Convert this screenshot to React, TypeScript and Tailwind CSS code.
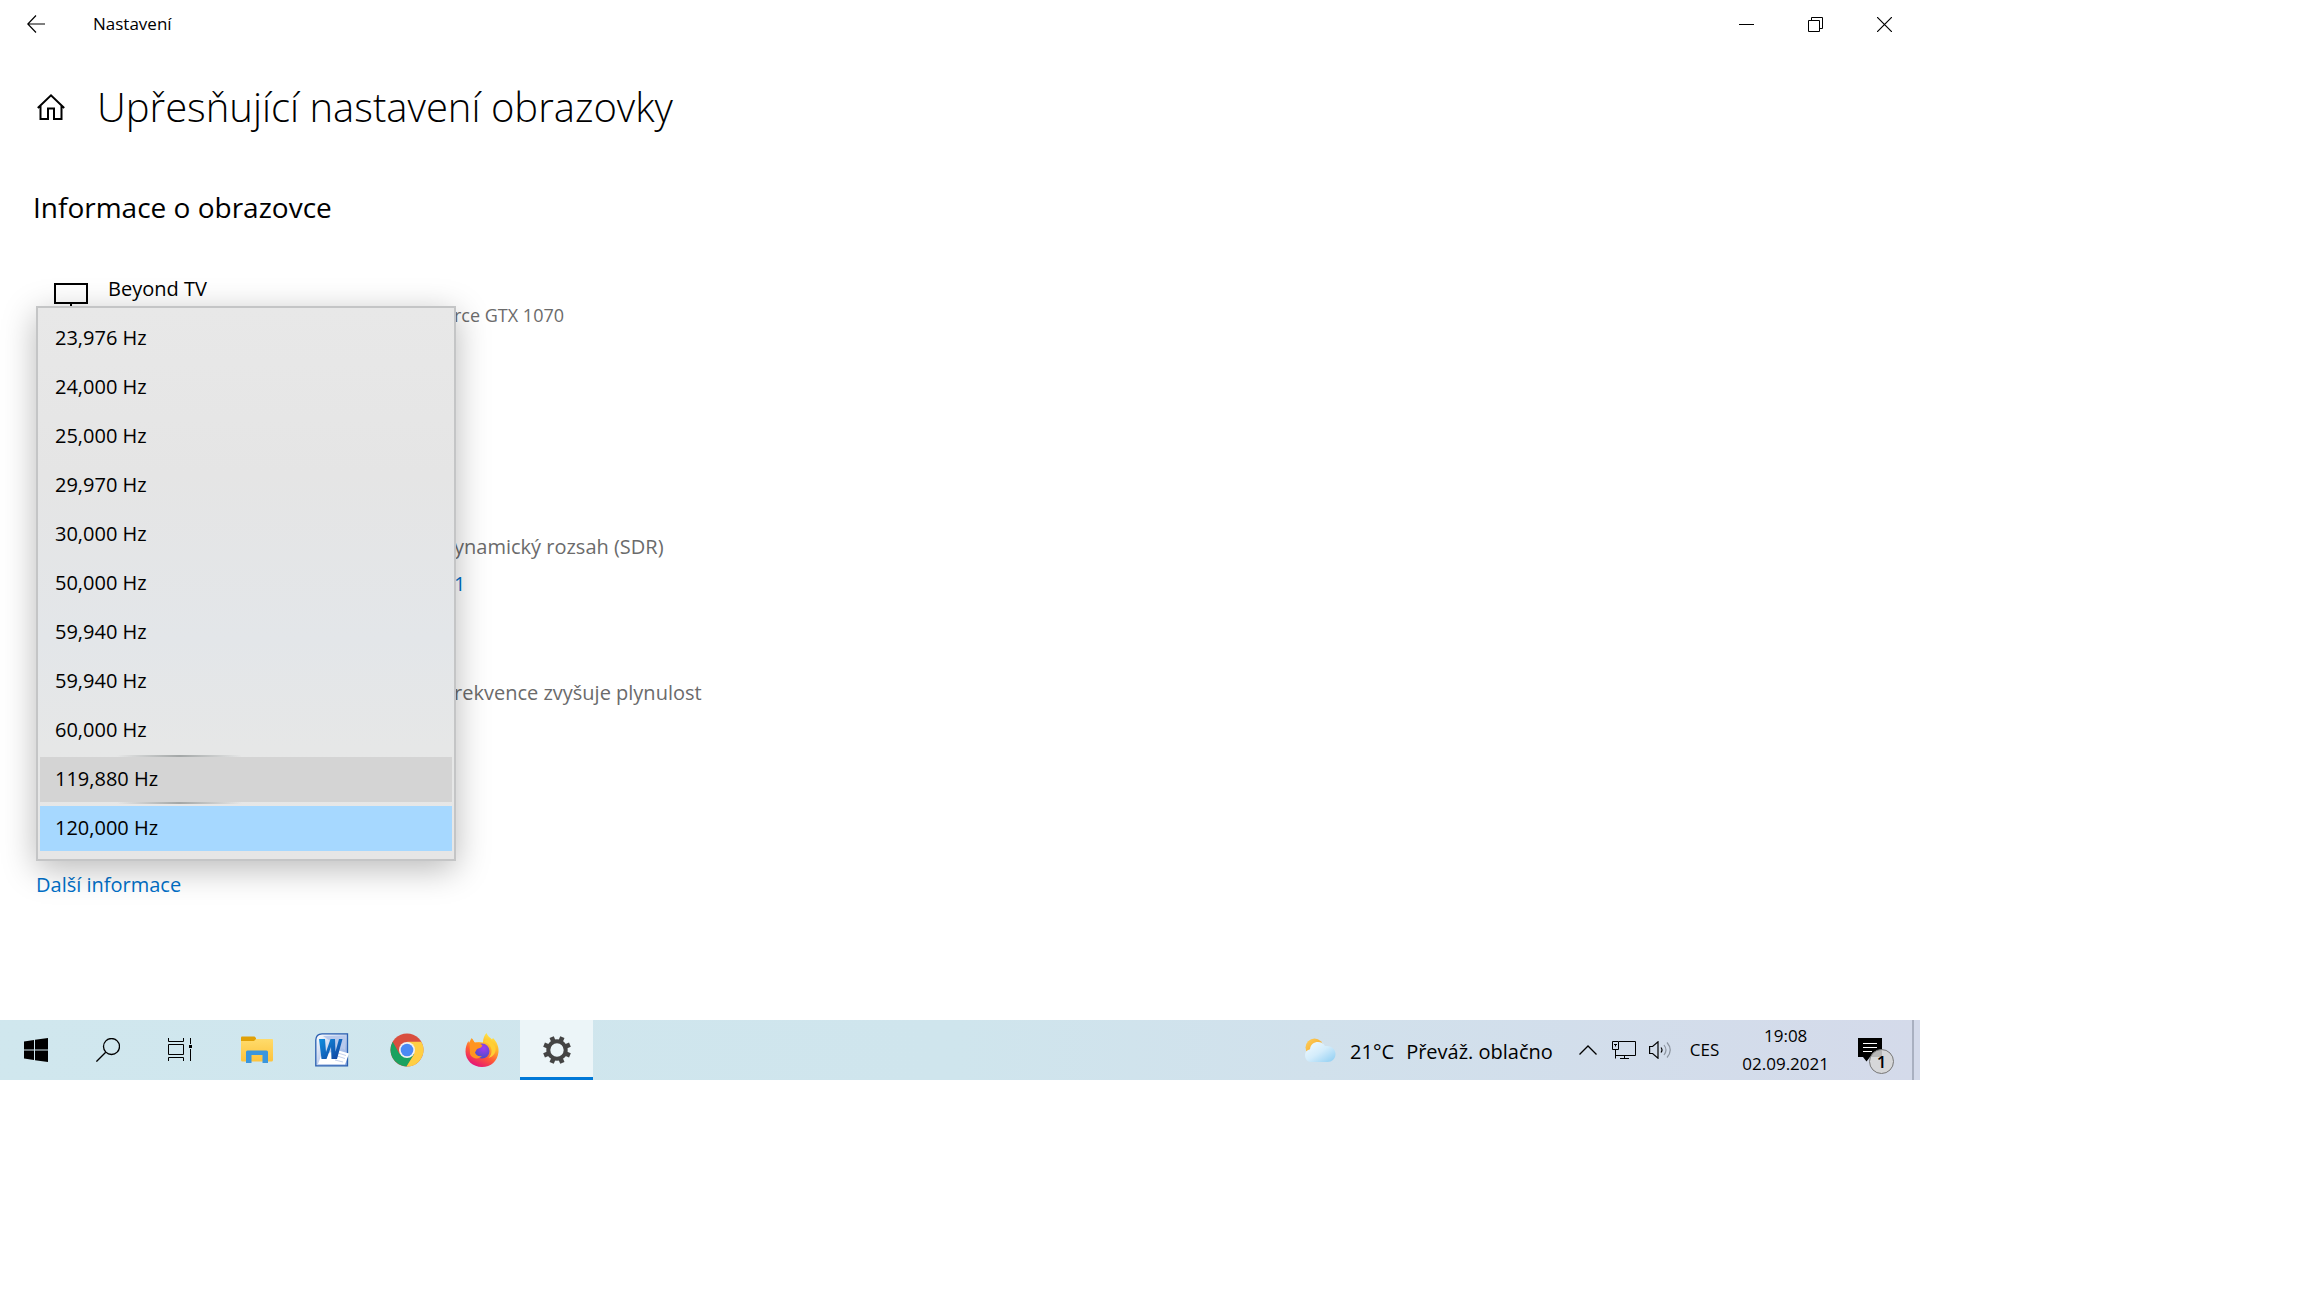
import React from 'react';

const rates = [
  '23,976 Hz',
  '24,000 Hz',
  '25,000 Hz',
  '29,970 Hz',
  '30,000 Hz',
  '50,000 Hz',
  '59,940 Hz',
  '59,940 Hz',
  '60,000 Hz',
  '119,880 Hz',
  '120,000 Hz',
];

const optionBase = 'block h-[49px] px-[15px] pt-[8px] text-[20px] text-black border-y-2 border-transparent bg-clip-padding';
// pointer is over this row, so it gets the soft reveal line above and below
const optionHover =
  'bg-black/8 [border-image:linear-gradient(to_right,transparent_19%,#a3a7a7_34%,transparent_49%)_2]';
const optionSelected = 'bg-[linear-gradient(#a6d8ff,#a6d8ff)]';

const BackIcon = () => (
  <svg width="18" height="18" viewBox="0 0 18 18" fill="none" stroke="#000" strokeWidth="1.2">
    <path d="M9 .5.8 9 9 17.500M.8 9H18" />
  </svg>
);

const HomeIcon = () => (
  <svg width="28" height="26" viewBox="0 0 28 26" fill="none" stroke="#000" strokeWidth="2">
    <path d="M.8 14 14 1.400 27.200 14M3.500 11.800V25H11V14.500h6V25h7.500V11.800" />
  </svg>
);

const MonitorIcon = () => (
  <svg width="34" height="30" viewBox="0 0 34 30" fill="none" stroke="#000" strokeWidth="2">
    <path d="M1 1h32v19H1zM17 20v7M9 28h16" />
  </svg>
);

const WindowsIcon = () => (
  <svg width="24" height="24" viewBox="0 0 24 24">
    <path d="M0 3.400 10 2v9.500H0zM11 1.800 24 0v11.500H11zM0 12.500h10V22L0 20.600zM11 12.500h13V24l-13-1.800z" />
  </svg>
);

const SearchIcon = () => (
  <svg width="24" height="24" viewBox="0 0 24 24" fill="none" stroke="#000" strokeWidth="1.300">
    <circle cx="15.500" cy="8.500" r="8" />
    <path d="M9.700 14.200.4 23.600" />
  </svg>
);

const TaskViewIcon = () => (
  <svg width="24" height="24" viewBox="0 0 24 24" fill="none" stroke="#000" strokeWidth="1">
    <path d="M.5 0v3.500h15V0M.5 6.500h15v10H.5zM.5 23v-3.500h15V23M22.500 0v6M22.500 11v12" />
    <path d="M21 7h3v3h-3z" fill="#000" stroke="none" />
  </svg>
);

const FolderIcon = () => (
  <svg width="32" height="28" viewBox="0 0 32 28">
    <defs>
      <linearGradient id="folder" x1="0" y1="0" x2="0" y2="1">
        <stop offset="0" stopColor="#ffdb6b" />
        <stop offset="1" stopColor="#fdc33c" />
      </linearGradient>
    </defs>
    <path d="M0 1.500Q0 .5 1 .5h12.500L15 2v3H0z" fill="#e0a006" />
    <path d="M0 5h13l2-2h16q1 0 1 1v20q0 1.500-1.500 1.500h-29Q0 25.500 0 24z" fill="url(#folder)" />
    <path d="M5 27V16q0-1.500 1.500-1.500h19q1.500 0 1.500 1.500v11h-5.500v-8h-11v8z" fill="#3a96dd" />
  </svg>
);

const WordIcon = () => (
  <svg width="34" height="34" viewBox="0 0 34 34">
    <defs>
      <linearGradient id="wordBg" x1="0" y1="0" x2="1" y2="1">
        <stop offset="0" stopColor="#fff" />
        <stop offset="1" stopColor="#7fa0dc" />
      </linearGradient>
      <linearGradient id="wordW" x1="0" y1="0" x2="1" y2="1">
        <stop offset="0" stopColor="#0f8fe0" />
        <stop offset="1" stopColor="#123f9c" />
      </linearGradient>
    </defs>
    <path d="M7 .8h25.500v32H.8V7Q1 1 7 .8z" fill="url(#wordBg)" stroke="#2a5fb0" strokeWidth="1.300" />
    <path d="M8 3h22v14L18 10z" fill="#b8c9ec" />
    <path d="m22 17 12 3.500-4 11L3 31l3-8z" fill="#fff" />
    <path d="m23 20 8 2.500M22 23l8 2.500M20 27l8 2" stroke="#c5d2ec" strokeWidth="1" />
    <path d="M4 6h6l1 13L15.500 6H20l.5 12.500L24 6h3.500L22 26h-5.500L16 14l-4.500 12H6.500z" fill="url(#wordW)" />
  </svg>
);

const ChromeIcon = () => (
  <svg width="34" height="34" viewBox="0 0 34 34">
    <circle cx="17" cy="17" r="16.500" fill="#d94f3f" />
    <path d="M2.700 8.800A16.500 16.500 0 0 0 16.500 33.500L24.500 21 9.500 21z" fill="#1aa260" />
    <path d="M31.300 8.800A16.500 16.500 0 0 1 16.500 33.500L24.200 21l-7-12.200z" fill="#ffcf44" />
    <circle cx="17" cy="17" r="8" fill="#f1f1f1" />
    <circle cx="17" cy="17" r="6.300" fill="#4a8af4" />
  </svg>
);

const FirefoxIcon = () => (
  <svg width="34" height="36" viewBox="0 0 34 36">
    <defs>
      <linearGradient id="fox" x1=".8" y1="0" x2=".3" y2="1">
        <stop offset="0" stopColor="#fff24a" />
        <stop offset=".35" stopColor="#ffb32c" />
        <stop offset=".65" stopColor="#ff5a36" />
        <stop offset="1" stopColor="#e3107c" />
      </linearGradient>
      <radialGradient id="globe" cx=".6" cy=".3" r=".7">
        <stop offset="0" stopColor="#a43bf0" />
        <stop offset="1" stopColor="#4a4fc8" />
      </radialGradient>
    </defs>
    <path
      d="M21.500 1c1 3 3.500 4.500 5.500 6.500l1-1.500c4 4 6 9 5.500 14C32.500 29 26 35 17 35 8 35 .5 28.500.5 19.500c0-4 1-7.500 3-10.500L4 11l2.500-5 3 4.500c3-.8 6-.8 8.500 0C18 6.500 19.500 3 21.500 1z"
      fill="url(#fox)"
    />
    <circle cx="17" cy="19" r="7.500" fill="url(#globe)" />
    <path d="M4.500 11 7 6.500l3 4.500c3-.5 5 .5 7.500 2.500l-1.500 2-4 1.500-2 3.500c1 3 4 4.500 7 3.500-3 4-10 3-12-2z" fill="#ff9420" />
    <path d="M18 10c4 0 8 3.500 8.500 8 .3 3-.8 6-3 8 5-1.500 8-5.500 7-10.500C29.500 12 26 10 24 6z" fill="#ffcf35" />
  </svg>
);

const GearIcon = () => (
  <svg width="28" height="28" viewBox="0 0 28 28" fill="none" stroke="#444">
    <circle cx="14" cy="14" r="8.700" strokeWidth="4" />
    <g strokeWidth="4.600">
      <path d="M14 0v5M14 23v5M0 14h5M23 14h5" transform="rotate(22.500 14 14)" />
      <path d="M14 0v5M14 23v5M0 14h5M23 14h5" transform="rotate(67.500 14 14)" />
    </g>
  </svg>
);

const WeatherIcon = () => (
  <svg width="32" height="24" viewBox="0 0 32 24">
    <defs>
      <linearGradient id="cloud" x1="0" y1="0" x2="1" y2="1">
        <stop offset="0" stopColor="#f4fbff" />
        <stop offset=".5" stopColor="#d3ecfb" />
        <stop offset="1" stopColor="#8ccdf2" />
      </linearGradient>
      <linearGradient id="sun" x1="0" y1="0" x2="1" y2="1">
        <stop offset="0" stopColor="#ffd05c" />
        <stop offset="1" stopColor="#f09a1a" />
      </linearGradient>
    </defs>
    <circle cx="10.500" cy="9.500" r="9" fill="url(#sun)" />
    <path d="M7 24a6.500 6.500 0 0 1-1-12.800C6.500 6.500 10 4 14 4c3 0 5.500 1.500 7 4 5.500-.8 10.500 2.500 10.500 8 0 4.500-3.500 8-8 8z" fill="url(#cloud)" />
  </svg>
);

const ChevronIcon = () => (
  <svg width="18" height="10" viewBox="0 0 18 10" fill="none" stroke="#000" strokeWidth="1.300">
    <path d="m.5 9.500 8.500-8.500 8.500 8.500" />
  </svg>
);

const NetworkIcon = () => (
  <svg width="24" height="18" viewBox="0 0 24 18" fill="none" stroke="#000" strokeWidth="1">
    <path d="M7 .5h16.500v14H3.500M.5.500H6.500v8H.5zM3.500 8.500v9M2 3.500h3M3.500 3.500v2M8 17.500h9M12.500 14.500v3" />
  </svg>
);

const SpeakerIcon = () => (
  <svg width="23" height="18" viewBox="0 0 23 18" fill="none" stroke="#000" strokeWidth="1.200">
    <path d="M.6 5.500h3L9 .8v16.400l-5.400-4.700h-3zM12 6.500q2 2.500 0 5" />
    <path d="M15 4q4 5 0 10M18 1.500q6.500 7.500 0 15" stroke="#8d95a0" />
  </svg>
);

const MessageIcon = () => (
  <svg width="24" height="24" viewBox="0 0 24 24">
    <path d="M0 0h24v19H12l-3.500 4.500L5 19H0z" />
    <path d="M5 5.500h14M5 9.500h14M5 13.500h9" stroke="#fff" />
  </svg>
);

const TitleBar = () => (
  <header className="flex h-[48px] items-center text-[17px]">
    <button aria-label="Zpět" className="flex w-[72px] justify-center">
      <BackIcon />
    </button>
    <span className="ml-[21px]">Nastavení</span>
    <div className="mr-px ml-auto flex">
      <button aria-label="Minimalizovat" className="flex h-[48px] w-[69px] items-center justify-center">
        <svg width="15" height="15" stroke="#000"><path d="M0 7.500h15" /></svg>
      </button>
      <button aria-label="Obnovit" className="flex h-[48px] w-[69px] items-center justify-center">
        <svg width="15" height="15" fill="none" stroke="#000"><path d="M.5 3.500h11v11H.5zM3.500 3.500v-3h11v11h-3" /></svg>
      </button>
      <button aria-label="Zavřít" className="flex h-[48px] w-[69px] items-center justify-center">
        <svg width="15" height="15" stroke="#000" strokeWidth="1.200"><path d="m0 0 15 15M15 0 0 15" /></svg>
      </button>
    </div>
  </header>
);

const RefreshRateSelect = () => (
  <select
    aria-label="Obnovovací frekvence"
    size={11}
    defaultValue="10"
    className="absolute top-0 left-[36px] h-[555px] w-[420px] appearance-none overflow-hidden border-2 border-[#c4c5c6] bg-[linear-gradient(#e8e8e8,#e5e5e5_30%,#e3e6e9_60%,#e6e7e7_80%,#e6e6e6)] px-[2px] py-[6px] shadow-[0_8px_32px_rgba(0,0,0,0.28)] outline-none"
  >
    {rates.map((rate, i) => (
      <option
        key={i}
        value={i}
        className={`${optionBase} ${i === 9 ? optionHover : ''} ${i === 10 ? optionSelected : ''}`}
      >
        {rate}
      </option>
    ))}
  </select>
);

const pinned = [
  { label: 'Průzkumník souborů', icon: <FolderIcon /> },
  { label: 'Word', icon: <WordIcon /> },
  { label: 'Chrome', icon: <ChromeIcon /> },
  { label: 'Firefox', icon: <FirefoxIcon /> },
];

const Taskbar = () => (
  <footer className="flex h-[60px] items-stretch bg-linear-to-r from-[#d0e7ee] via-[#cfe5ed] via-50% to-[#d4daea]">
    <button aria-label="Start" className="flex w-[72px] items-center justify-center"><WindowsIcon /></button>
    <button aria-label="Hledat" className="flex w-[72px] items-center justify-center"><SearchIcon /></button>
    <button aria-label="Zobrazení úkolů" className="flex w-[72px] items-center justify-center"><TaskViewIcon /></button>
    <div className="ml-[4px] flex gap-[2px]">
      {pinned.map((app) => (
        <button key={app.label} aria-label={app.label} className="flex w-[73px] items-center justify-center">
          {app.icon}
        </button>
      ))}
      <button
        aria-label="Nastavení"
        className="flex w-[73px] items-center justify-center border-b-3 border-[#0078d7] bg-white/60 pt-[3px]"
      >
        <GearIcon />
      </button>
    </div>

    <div className="ml-auto flex items-center">
      <button className="flex items-center text-[20px]">
        <WeatherIcon />
        <span className="ml-[14px] pt-[4px]">21°C</span>
        <span className="ml-[12px] pt-[4px]">Převáž. oblačno</span>
      </button>
      <button aria-label="Skryté ikony" className="ml-[26px]"><ChevronIcon /></button>
      <button aria-label="Síť" className="ml-[15px]"><NetworkIcon /></button>
      <button aria-label="Hlasitost" className="ml-[13px]"><SpeakerIcon /></button>
      <button className="ml-[18px] text-[17px]">CES</button>
      <button className="ml-[23px] text-center text-[17px] leading-[28px]">
        19:08
        <br />
        02.09.2021
      </button>
      <button aria-label="Oznámení" className="relative ml-[29px]">
        <MessageIcon />
        <span className="absolute top-[11px] left-[11px] flex size-[25px] items-center justify-center rounded-full border border-[#777] bg-[#d6d6d6]/85 text-[17px] font-semibold">
          1
        </span>
      </button>
      <span className="ml-[30px] h-full w-[8px] border-l-2 border-[#a9b0c0]" />
    </div>
  </footer>
);

export default function App() {
  return (
    <div className="min-h-screen bg-white font-['Open_Sans','Noto_Sans',sans-serif] text-black">
      <div className="flex aspect-video w-5/6 flex-col">
        <TitleBar />
        <main className="flex-1">
          <div className="mt-[27px] flex h-[64px] items-center gap-[32px] pl-[37px]">
            <HomeIcon />
            <h1 className="text-[40px] leading-[64px] font-light">Upřesňující nastavení obrazovky</h1>
          </div>
          <h2 className="mt-[46px] pl-[33px] text-[28px] leading-[44px]">Informace o obrazovce</h2>
          <div className="mt-[45px] flex h-[32px] gap-[20px] pl-[54px] text-[20px] leading-[30px]">
            <div className="pt-[9px]"><MonitorIcon /></div>
            <p>Beyond TV</p>
          </div>
          <section className="relative h-[555px] pl-[454px] text-[#6b6b6b]">
            <p className="text-[18px] leading-[18px]">rce GTX 1070</p>
            <p className="mt-[208px] text-[20px] leading-[30px]">ynamický rozsah (SDR)</p>
            <a href="#adapter" className="mt-[7px] block text-[20px] leading-[30px] text-[#0070c8]">1</a>
            <p className="mt-[79px] text-[20px] leading-[30px]">rekvence zvyšuje plynulost</p>
            <RefreshRateSelect />
          </section>
          <a href="#info" className="mt-[9px] ml-[36px] inline-block text-[20px] leading-[30px] text-[#0070c8]">
            Další informace
          </a>
        </main>
        <Taskbar />
      </div>
    </div>
  );
}
